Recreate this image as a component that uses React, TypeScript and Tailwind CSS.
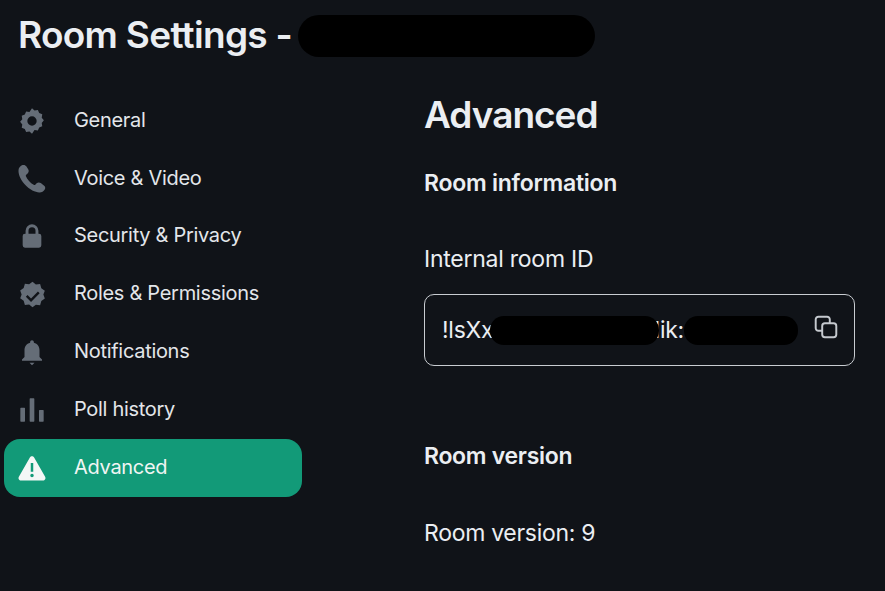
const NAV = [
  { label: "General", size: "w-[32px] h-[32px]", icon: "M12 2.500l1.900 1.600 2.500-.4 1 2.300 2.300 1-.4 2.500 1.600 1.900-1.600 2.100.4 2.400-2.300 1-1 2.300-2.500-.4L12 21.500l-1.900-1.600-2.500.4-1-2.300-2.300-1 .4-2.400L3.100 12.500l1.600-1.900-.4-2.500 2.300-1 1-2.300 2.500.4zM12 8.500a3.500 3.500 0 100 7 3.500 3.500 0 000-7z" },
  { label: "Voice & Video", size: "w-[34px] h-[34px]", icon: "M5.300 2.200c-1.500.6-2.700 1.900-2.800 3.500-.2 2.700.9 6.200 4.300 10 3.700 4 7.500 5.600 10.300 5.800 1.700.1 3-.8 3.900-2.100.6-.9.400-2-.4-2.700l-2.400-1.800c-.9-.7-2.100-.6-2.900.1l-1 1c-.3.300-.7.300-1.100.1-1.200-.7-2.300-1.600-3.300-2.700-.9-1-1.700-2.200-2.200-3.300-.2-.4-.1-.8.200-1.100l1-.9c.8-.7 1-1.900.5-2.800L8.100 3.200C7.500 2.200 6.300 1.800 5.300 2.200z" },
  { label: "Security & Privacy", size: "w-[28px] h-[28px]", icon: "M12 2a5.500 5.500 0 00-5.500 5.500V10H6a2 2 0 00-2 2v8a2 2 0 002 2h12a2 2 0 002-2v-8a2 2 0 00-2-2h-.5V7.500A5.500 5.500 0 0012 2zm3 8H9V7.500a3 3 0 016 0z" },
  { label: "Roles & Permissions", size: "w-[29px] h-[29px]", icon: "M12 1.500l2.800 2.200 3.500-.3 1 3.400 2.900 2-1.200 3.300 1.200 3.300-2.900 2-1 3.400-3.500-.3L12 22.500l-2.800-2.200-3.500.3-1-3.400-2.900-2 1.200-3.300-1.200-3.300 2.900-2 1-3.400 3.500.3zM16.500 9.600L10.800 15.300 7.900 12.500 6.500 13.900l4.300 4.300 7.100-7.200z" },
  { label: "Notifications", size: "w-[30px] h-[30px]", icon: "M12 2.500c-.8 0-1.500.7-1.500 1.500v.6C7.600 5.300 6 7.800 6 10.700V16l-2 2v1h16v-1l-2-2v-5.300c0-2.900-1.600-5.400-4.500-6.100V4c0-.8-.7-1.500-1.500-1.500zM10 20.500h4L12 22.500z" },
  { label: "Poll history", size: "w-[28px] h-[28px]", icon: "M10.500 2h3A.5.500 0 0114 2.500v19a.5.500 0 01-.5.500h-3a.5.500 0 01-.5-.5v-19a.5.500 0 01.5-.5zM2.500 10h3a.5.500 0 01.5.500v11a.5.500 0 01-.5.500h-3a.5.500 0 01-.5-.5v-11a.5.500 0 01.5-.5zM18.500 12h3a.5.500 0 01.5.500v9a.5.500 0 01-.5.500h-3a.5.500 0 01-.5-.5v-9a.5.500 0 01.5-.5z" },
  { label: "Advanced", active: true, size: "w-[30px] h-[30px]", icon: "M12 2.500c-.7 0-1.300.4-1.700 1L1.500 19c-.8 1.300.2 3 1.700 3h17.600c1.500 0 2.500-1.700 1.700-3L13.700 3.500c-.4-.6-1-1-1.700-1zM11 8h2v7h-2zM12 16.500a1.400 1.400 0 110 2.800 1.400 1.400 0 010-2.800z" },
];

export default function App() {
  return (
    <div className="h-[591px] overflow-hidden bg-[#101318] text-[#ebeef2] font-['Inter',sans-serif]">
      {/* Header */}
      <div className="flex items-center pl-[18px] pt-[15px] h-[57px]">
        <h1 className="text-[37px] leading-[38px] font-semibold tracking-[-0.7px] whitespace-nowrap -mt-[3px]">Room Settings -</h1>
        <div className="ml-[6px] w-[297px] h-[42px] rounded-[21px] bg-black" />
      </div>

      <div className="flex pt-[34px]">
        {/* Sidebar */}
        <nav className="w-[420px] shrink-0 pl-1 pr-[118px] pt-px">
          {NAV.map(({ label, icon, active, size }) => (
            <div
              key={label}
              className={active
                ? "h-[57.8px] flex items-center gap-[28px] pl-[14px] rounded-[16px] bg-[#129a78] text-[#f0f5f3]"
                : "h-[57.8px] flex items-center gap-[28px] pl-[14px] rounded-[16px] text-[#e3e6ea]"}
            >
              <div className="w-[28px] shrink-0 flex justify-center">
                <svg viewBox="0 0 24 24" className={`${size} shrink-0 ${active ? "fill-[#f4f7f6]" : "fill-[#656d77]"}`}>
                  <path fillRule="evenodd" d={icon} />
                </svg>
              </div>
              <span className="text-[20px] leading-6 tracking-[-0.3px] whitespace-nowrap -mt-[2.2px]">{label}</span>
            </div>
          ))}
        </nav>

        {/* Content */}
        <main className="pl-1 w-[435px]">
          <h2 className="text-[37px] leading-[44px] font-semibold tracking-[-1px] mt-[2px]">Advanced</h2>
          <h3 className="mt-[32px] text-[23px] leading-7 font-semibold tracking-[-0.25px]">Room information</h3>
          <p className="mt-[48px] text-[23px] leading-7 tracking-[-0.25px]">Internal room ID</p>
          <div className="mt-[21px] h-[72px] w-[431px] flex items-center justify-between rounded-[10px] border border-[#c8ccd1] pl-[17px] pr-[16px]">
            <div className="flex items-center text-[23px] leading-7 tracking-[-0.25px] whitespace-nowrap">
              <span className="w-[48px]">!lsXx</span>
              <span className="relative z-10 w-[169px] h-[29px] rounded-[14px] bg-black" />
              <span className="w-[25px] flex justify-end">lik:</span>
              <span className="w-[114px] h-[29px] rounded-[14px] bg-black" />
            </div>
            <svg viewBox="0 0 24 24" fill="none" stroke="#c5c9ce" strokeWidth="1.800" className="w-[26px] h-[26px] -mt-[6px] -mr-px">
              <rect x="8.500" y="8.500" width="13" height="13" rx="2.500" />
              <path d="M15.500 8.500V5A2.500 2.500 0 0013 2.500H5A2.500 2.500 0 002.500 5v8A2.500 2.500 0 005 15.500h3.500" />
            </svg>
          </div>
          <h3 className="mt-[76px] text-[23px] leading-7 font-semibold tracking-[-0.3px]">Room version</h3>
          <p className="mt-[49px] text-[23px] leading-7 tracking-[-0.3px]">Room version: 9</p>
        </main>
      </div>
    </div>
  );
}
